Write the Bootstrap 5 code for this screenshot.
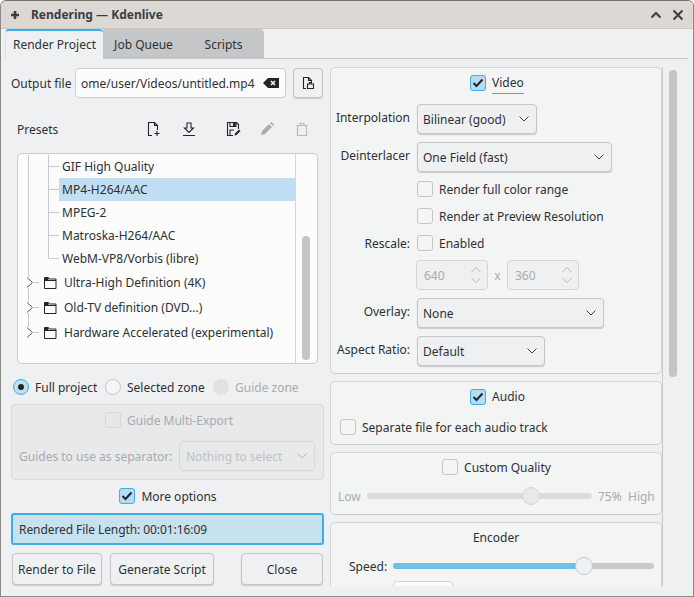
<!DOCTYPE html>
<html lang="en">
<head>
<meta charset="utf-8">
<title>Rendering — Kdenlive</title>
<link href="https://cdn.jsdelivr.net/npm/bootstrap@5.3.0/dist/css/bootstrap.min.css" rel="stylesheet">
<style>
html,body{margin:0;height:597px;overflow:hidden;background:#fff;}
body{font-family:"Noto Sans",sans-serif;font-size:12px;line-height:17px;color:#2e3134;}
.win{width:694px;height:597px;background:#eff0f1;border:1px solid #8a8986;border-top-color:#6f6e6b;border-radius:6px 6px 0 0;overflow:hidden;}
.tbar{height:28px;background:#dcd8d4;border-bottom:1px solid #c9c8c6;padding:0 8px 0 7px;flex:none;}
.ttl{font-weight:700;color:#3b3e41;margin-left:9px;}
.tabrow{height:30px;margin-left:4px;margin-right:5px;border-bottom:1px solid #c4c6c8;}
.tab-on,.tab-off{height:30px;display:flex;align-items:center;}
.tab-on{width:98px;justify-content:center;background:#eff0f1;border-top:2px solid #3daee9;border-radius:4px 4px 0 0;border-left:1px solid #dfe0e1;padding-bottom:2px;}
.tabs-off{background:#c4c6c8;border-radius:0 4px 0 0;width:161px;height:29px;}
.tab-a{width:80px;justify-content:center;height:29px;padding:1px 0 0 1px;}
.tab-b{width:81px;justify-content:center;height:29px;padding-top:1px;}
.panes{padding-left:10px;}
.lcol{width:313px;margin-top:9px;}
.rcol{width:348px;margin-left:6px;margin-top:8px;}
.h30{height:30px;}
.outl{width:57px;flex:none;white-space:nowrap;}
.field{background:#fcfcfc;border:1px solid #ccced0;border-radius:4px;width:211px;margin-left:7px;padding:0 6px 0 5px;flex:none;}
.field-text{white-space:nowrap;overflow:hidden;flex:1;}
.kbtn{background:#eff0f1;border:1px solid #c4c6c7;border-radius:4px;box-shadow:0 1px 1px #c9cbcc;padding:0;color:#2e3134;font-size:12px;line-height:17px;}
.kbtn.btn:hover{background:#eff0f1;color:#2e3134;}
.squ{width:30px;margin-left:7px;flex:none;}
.presets{height:24px;margin-top:19px;padding-left:6px;}
.ptitle{width:45px;flex:none;}
.pi{width:16px;height:16px;display:block;flex:none;}
.pi1{margin-left:83px;}.pi2{margin-left:20px;}.pi3{margin-left:28px;}.pi4{margin-left:18px;}.pi5{margin-left:19px;}
.tree{height:211px;width:301px;margin-left:6px;margin-top:12px;background:#fcfcfc;border:1px solid #c9cbcc;border-radius:5px;overflow:hidden;}
.tree-list{width:278px;border-right:1px solid #d5d6d7;height:100%;}
.leaf{height:23px;}
.leaf-first{margin-top:1px;}
.leaf svg,.fold svg{display:block;flex:none;}
.leaf-t{flex:1;height:23px;line-height:23px;padding-left:3px;}
.leaf-sel{background:#c0dff4;}
.fold{height:25px;}
.fold-t{padding-left:6px;}
.tsb{flex:1;padding-top:82px;padding-left:6px;}
.thumb{width:8px;height:124px;background:#c4c5c5;border-radius:4px;}
.rrow{height:20px;margin-top:13px;padding-left:2px;}
.rad{width:16px;height:16px;border-radius:50%;border:1px solid #c4c6c7;background:#f4f5f5;flex:none;display:flex;align-items:center;justify-content:center;}
.rad-on{border-color:#3daee9;background:#bfe0f3;}
.rad-on i{display:block;width:6px;height:6px;border-radius:50%;background:#232629;}
.rad-off{background:#e0e1e3;border-color:#e0e1e3;}
.rlabel{margin-left:6px;flex:none;white-space:nowrap;}
.rl1{width:62px;}.rl2{width:78px;}
.r2{margin-left:8px;}.r3{margin-left:8px;}
.dim{color:#a9abad;}
.grp{height:76px;margin-top:7px;background:#e8e9ea;border:1px solid #d9dadb;border-radius:4px;}
.grp-top{height:30px;padding-left:93px;}
.grp-bot{height:30px;margin-top:6px;padding-left:7px;}
.glabel{width:153px;flex:none;white-space:nowrap;}
.cbx{width:16px;height:16px;border:1px solid #c4c6c7;border-radius:3px;background:#f4f5f5;flex:none;display:flex;align-items:center;justify-content:center;}
.cbx-on{background:#b5dcf3;border-color:#3daee9;}
.cbx-dis{background:#e6e7e8;border-color:#d3d5d6;}
.clabel{margin-left:6px;}
.dcombo{width:136px;height:30px;margin-left:7px;border:1px solid #d6d7d8;border-radius:4px;padding:0 6px;color:#bfc1c3;background:#e8e9ea;flex:none;}
.more{height:20px;margin-top:6px;padding-left:1px;}
.msg{height:32px;margin-top:7px;background:#c8e1ef;border:2px solid #3daee9;border-radius:3px;padding-left:6px;letter-spacing:-.08px;}
.btns{margin-top:8px;height:32px;padding-left:1px;padding-right:1px;}
.b1{width:90px;}.b2{width:104px;margin-left:8px;}.b3{width:82px;margin-left:27px;}
.scrollwrap{height:519px;overflow:hidden;}
.frames{width:333px;height:519px;border-right:1px solid #c8cacb;overflow:hidden;flex:none;}
.frm{width:332px;background:#f3f4f4;border:1px solid #d5d6d7;border-bottom-color:#c9cbcc;border-radius:5px;}
.f-video{height:307px;}
.f-audio{height:64px;margin-top:7px;}
.f-qual{height:63px;margin-top:7px;}
.f-enc{height:120px;margin-top:7px;}
.vhead{height:30px;padding-left:2px;}
.vlabel{margin-left:6px;border-bottom:1px solid #3daee9;height:22px;line-height:21px;width:32px;}
.vrow{margin-top:8px;}
.vrow-first{margin-top:6px;}
.lbl{width:79px;text-align:right;margin-right:7px;flex:none;padding-bottom:4px;white-space:nowrap;}
.lbl-flat{padding-bottom:0;}
.combo{height:30px;padding:0 6px 0 5px;text-align:left;flex:none;}
.c120{width:120px;}.c195{width:195px;}.c187{width:187px;}.c128{width:128px;}
.r22{height:22px;margin-top:5px;}
.r22a{margin-top:6px;}
.spinrow{margin-top:6px;height:30px;padding-left:85px;}
.spin{width:72px;height:30px;border:1px solid #d3d5d6;border-radius:4px;padding:0 5px 0 7px;background:#eff0f1;color:#a9abad;flex:none;}
.xsep{width:19px;text-align:center;color:#a9abad;flex:none;}
.ahead{height:29px;padding-left:3px;}
.arow{height:22px;margin-top:5px;padding-left:9px;}
.sl-row{height:22px;margin-top:4px;padding-left:7px;}
.qhead{height:28px;padding-left:1px;}
.slow{width:22px;flex:none;}
.track{height:6px;border-radius:3px;background:#dadbdc;position:relative;flex:none;}
.t-q{width:225px;margin-left:7px;}
.t-s{width:261px;margin-left:6px;background:#c8c9ca;}
.spdl{width:38px;flex:none;}
.fill{height:6px;background:#6ec0ea;border-radius:3px;}
.knob{position:absolute;top:-6px;width:18px;height:18px;border-radius:50%;background:#e9eaeb;border:1px solid #d3d5d6;}
.knob-a{background:#f0f1f2;border-color:#c4c6c7;}
.k-q{left:155px;}.k-s{left:182px;}
.q75{margin-left:6px;width:24px;flex:none;}.qhi{margin-left:6px;}
.enc-t{height:28px;}
.spd{height:22px;margin-top:4px;padding-left:18px;}
.ebox{width:60px;height:30px;margin-left:62px;margin-top:4px;background:#fcfcfc;border:1px solid #d0d2d3;border-radius:4px;}
.rsb{padding:3px 0 0 6px;}
.rthumb{width:8px;height:307px;background:#c4c5c5;border-radius:4px;}
</style>
</head>
<body>
<div class="win d-flex flex-column">
  <div class="tbar d-flex align-items-center">
    <svg width="14" height="14" viewBox="0 0 14 14"><path d="M5.700 3h2.600v2.700H11v2.600H8.300V11H5.700V8.300H3V5.700h2.700Z" fill="#3b3e41"/></svg>
    <span class="ttl">Rendering — Kdenlive</span>
    <svg class="ms-auto" width="14" height="14" viewBox="0 0 14 14"><path d="M2.500 9.500 7 5l4.500 4.500" fill="none" stroke="#3b3e41" stroke-width="2"/></svg>
    <svg class="ms-2" width="14" height="14" viewBox="0 0 14 14"><path d="M2.500 2.500l9 9M11.500 2.500l-9 9" fill="none" stroke="#3b3e41" stroke-width="2"/></svg>
  </div>

  <div class="tabrow d-flex">
    <div class="tab-on">Render Project</div>
    <div class="tabs-off d-flex">
      <div class="tab-off tab-a">Job Queue</div>
      <div class="tab-off tab-b">Scripts</div>
    </div>
  </div>

  <div class="panes d-flex">
    <div class="lcol">
      <div class="d-flex align-items-center h30">
        <span class="outl">Output file</span>
        <div class="field h30 d-flex align-items-center">
          <span class="field-text">ome/user/Videos/untitled.mp4</span>
          <svg width="16" height="12" viewBox="0 0 16 12"><path d="M0 6 5 1h11v10H5Z" fill="#232629"/><path d="M8 4l4 4M12 4 8 8" stroke="#fcfcfc" stroke-width="1.500"/></svg>
        </div>
        <button class="btn kbtn squ h30 d-flex align-items-center justify-content-center" type="button">
          <svg width="14" height="14" viewBox="0 0 14 14" fill="none" stroke="#232629" stroke-width="1.100"><path d="M5 12.500H2.500v-11h5l3 3V6M7.500 1.500v3h3"/><path d="M6.500 8h6v4.500h-6zM8.500 8V6.500h2V8"/></svg>
        </button>
      </div>
      <div class="presets d-flex align-items-center">
        <span class="ptitle">Presets</span>
        <svg class="pi pi1" viewBox="0 0 16 16" fill="none" stroke="#232629" stroke-width="1.100"><path d="M7 14.500H3.500v-13h6l3 3V9M9.500 1.500v3h3M12 10v5M9.500 12.500h5"/></svg>
        <svg class="pi pi2" viewBox="0 0 16 16" fill="none" stroke="#232629" stroke-width="1.100"><path d="M2 14.500h12M6 2v5H3.500L8 11.500 12.500 7H10V2Z"/></svg>
        <svg class="pi pi3" viewBox="0 0 16 16" fill="none" stroke="#232629" stroke-width="1.100"><path d="M8 14.500H2.500v-13h9l2 2V8M5 1.500v4h6v-4M5 14.500V9h4"/><path d="M8.500 2.500h1.500v2H8.500z" fill="#232629"/><path d="M9.500 14.500l.5-2 4-4 1.500 1.500-4 4Z" fill="#232629" stroke="none"/></svg>
        <svg class="pi pi4" viewBox="0 0 16 16" fill="#a9abad"><path d="M2 14l1-4 7-7 3 3-7 7Z"/><path d="M11 2l1.500-1 2.500 2.500-1 1.500Z"/></svg>
        <svg class="pi pi5" viewBox="0 0 16 16" fill="none" stroke="#b6b8ba" stroke-width="1.100"><path d="M2.500 4.500h11M6 4.500v-2h4v2M3.500 4.500v10h9v-10"/></svg>
      </div>

      <div class="tree d-flex">
        <div class="tree-list">
          <div class="leaf leaf-first d-flex"><svg width="41" height="23" viewBox="0 0 41 23" stroke="#c8c9ca"><path d="M10.500 0v23M30.500 0v23M31 11.500h10" fill="none"/></svg><div class="leaf-t">GIF High Quality</div></div>
          <div class="leaf d-flex"><svg width="41" height="23" viewBox="0 0 41 23" stroke="#c8c9ca"><path d="M10.500 0v23M30.500 0v23M31 11.500h10" fill="none"/></svg><div class="leaf-t leaf-sel">MP4-H264/AAC</div></div>
          <div class="leaf d-flex"><svg width="41" height="23" viewBox="0 0 41 23" stroke="#c8c9ca"><path d="M10.500 0v23M30.500 0v23M31 11.500h10" fill="none"/></svg><div class="leaf-t">MPEG-2</div></div>
          <div class="leaf d-flex"><svg width="41" height="23" viewBox="0 0 41 23" stroke="#c8c9ca"><path d="M10.500 0v23M30.500 0v23M31 11.500h10" fill="none"/></svg><div class="leaf-t">Matroska-H264/AAC</div></div>
          <div class="leaf d-flex"><svg width="41" height="23" viewBox="0 0 41 23" stroke="#c8c9ca"><path d="M10.500 0v23M30.500 0v11.500H41" fill="none"/></svg><div class="leaf-t">WebM-VP8/Vorbis (libre)</div></div>
          <div class="fold d-flex align-items-center"><svg width="40" height="25" viewBox="0 0 40 25"><path d="M10.500 0v7M10.500 18v7M16 12.500h5" stroke="#c8c9ca" fill="none"/><path d="M9 7.500l5.500 5-5.500 5" stroke="#55585a" fill="none"/><path d="M26.500 7.500h4l1 1.500h6.500v9.500h-11.500zM26.500 10.500h11.500" stroke="#232629" fill="none"/><path d="M27 8h3.500v2.500H27z" fill="#232629"/></svg><span class="fold-t">Ultra-High Definition (4K)</span></div>
          <div class="fold d-flex align-items-center"><svg width="40" height="25" viewBox="0 0 40 25"><path d="M10.500 0v7M10.500 18v7M16 12.500h5" stroke="#c8c9ca" fill="none"/><path d="M9 7.500l5.500 5-5.500 5" stroke="#55585a" fill="none"/><path d="M26.500 7.500h4l1 1.500h6.500v9.500h-11.500zM26.500 10.500h11.500" stroke="#232629" fill="none"/><path d="M27 8h3.500v2.500H27z" fill="#232629"/></svg><span class="fold-t">Old-TV definition (DVD...)</span></div>
          <div class="fold d-flex align-items-center"><svg width="40" height="25" viewBox="0 0 40 25"><path d="M10.500 0v7M16 12.500h5" stroke="#c8c9ca" fill="none"/><path d="M9 7.500l5.500 5-5.500 5" stroke="#55585a" fill="none"/><path d="M26.500 7.500h4l1 1.500h6.500v9.500h-11.500zM26.500 10.500h11.500" stroke="#232629" fill="none"/><path d="M27 8h3.500v2.500H27z" fill="#232629"/></svg><span class="fold-t">Hardware Accelerated (experimental)</span></div>
        </div>
        <div class="tsb"><div class="thumb"></div></div>
      </div>

      <div class="rrow d-flex align-items-center">
        <span class="rad rad-on"><i></i></span><span class="rlabel rl1">Full project</span>
        <span class="rad r2"></span><span class="rlabel rl2">Selected zone</span>
        <span class="rad rad-off r3"></span><span class="rlabel dim">Guide zone</span>
      </div>

      <div class="grp">
        <div class="grp-top d-flex align-items-center dim"><span class="cbx cbx-dis"></span><span class="clabel">Guide Multi-Export</span></div>
        <div class="grp-bot d-flex align-items-center dim">
          <span class="glabel">Guides to use as separator:</span>
          <div class="dcombo d-flex align-items-center justify-content-between"><span>Nothing to select</span>
            <svg width="12" height="8" viewBox="0 0 12 8"><path d="M1.500 1.500 6 6l4.500-4.500" fill="none" stroke="#b6b8ba"/></svg></div>
        </div>
      </div>

      <div class="more d-flex align-items-center justify-content-center">
        <span class="cbx cbx-on"><svg width="12" height="10" viewBox="0 0 12 10"><path d="M1.500 5 4.500 8 10.500 1.500" fill="none" stroke="#232629" stroke-width="2"/></svg></span><span class="clabel">More options</span>
      </div>

      <div class="msg d-flex align-items-center">Rendered File Length: 00:01:16:09</div>

      <div class="btns d-flex">
        <button class="btn kbtn b1" type="button">Render to File</button>
        <button class="btn kbtn b2" type="button">Generate Script</button>
        <button class="btn kbtn b3" type="button">Close</button>
      </div>
    </div>

    <div class="rcol d-flex scrollwrap">
      <div class="frames">
        <div class="frm f-video">
          <div class="vhead d-flex align-items-center justify-content-center">
            <span class="cbx cbx-on"><svg width="12" height="10" viewBox="0 0 12 10"><path d="M1.500 5 4.500 8 10.500 1.500" fill="none" stroke="#232629" stroke-width="2"/></svg></span><span class="vlabel">Video</span>
          </div>
          <div class="d-flex align-items-center vrow-first">
            <span class="lbl">Interpolation</span>
            <button class="btn kbtn combo c120 d-flex align-items-center justify-content-between" type="button"><span>Bilinear (good)</span><svg width="12" height="8" viewBox="0 0 12 8"><path d="M1.500 1.500 6 6l4.500-4.500" fill="none" stroke="#3b3e41"/></svg></button>
          </div>
          <div class="d-flex align-items-center vrow">
            <span class="lbl">Deinterlacer</span>
            <button class="btn kbtn combo c195 d-flex align-items-center justify-content-between" type="button"><span>One Field (fast)</span><svg width="12" height="8" viewBox="0 0 12 8"><path d="M1.500 1.500 6 6l4.500-4.500" fill="none" stroke="#3b3e41"/></svg></button>
          </div>
          <div class="d-flex align-items-center r22 r22a"><span class="lbl lbl-flat"></span><span class="cbx"></span><span class="clabel">Render full color range</span></div>
          <div class="d-flex align-items-center r22"><span class="lbl lbl-flat"></span><span class="cbx"></span><span class="clabel">Render at Preview Resolution</span></div>
          <div class="d-flex align-items-center r22"><span class="lbl lbl-flat">Rescale:</span><span class="cbx"></span><span class="clabel">Enabled</span></div>
          <div class="spinrow d-flex align-items-center">
            <div class="spin d-flex align-items-center justify-content-between"><span>640</span><svg width="12" height="20" viewBox="0 0 12 20"><path d="M1.500 7 6 2.500 10.500 7M1.500 13 6 17.500 10.500 13" fill="none" stroke="#b6b8ba"/></svg></div>
            <span class="xsep">x</span>
            <div class="spin d-flex align-items-center justify-content-between"><span>360</span><svg width="12" height="20" viewBox="0 0 12 20"><path d="M1.500 7 6 2.500 10.500 7M1.500 13 6 17.500 10.500 13" fill="none" stroke="#b6b8ba"/></svg></div>
          </div>
          <div class="d-flex align-items-center vrow">
            <span class="lbl">Overlay:</span>
            <button class="btn kbtn combo c187 d-flex align-items-center justify-content-between" type="button"><span>None</span><svg width="12" height="8" viewBox="0 0 12 8"><path d="M1.500 1.500 6 6l4.500-4.500" fill="none" stroke="#3b3e41"/></svg></button>
          </div>
          <div class="d-flex align-items-center vrow">
            <span class="lbl">Aspect Ratio:</span>
            <button class="btn kbtn combo c128 d-flex align-items-center justify-content-between" type="button"><span>Default</span><svg width="12" height="8" viewBox="0 0 12 8"><path d="M1.500 1.500 6 6l4.500-4.500" fill="none" stroke="#3b3e41"/></svg></button>
          </div>
        </div>

        <div class="frm f-audio">
          <div class="ahead d-flex align-items-center justify-content-center">
            <span class="cbx cbx-on"><svg width="12" height="10" viewBox="0 0 12 10"><path d="M1.500 5 4.500 8 10.500 1.500" fill="none" stroke="#232629" stroke-width="2"/></svg></span><span class="clabel">Audio</span>
          </div>
          <div class="arow d-flex align-items-center"><span class="cbx"></span><span class="clabel">Separate file for each audio track</span></div>
        </div>

        <div class="frm f-qual">
          <div class="qhead d-flex align-items-center justify-content-center"><span class="cbx"></span><span class="clabel">Custom Quality</span></div>
          <div class="sl-row d-flex align-items-center dim">
            <span class="slow">Low</span>
            <div class="track t-q"><span class="knob k-q"></span></div>
            <span class="q75">75%</span><span class="qhi">High</span>
          </div>
        </div>

        <div class="frm f-enc">
          <div class="enc-t d-flex align-items-center justify-content-center">Encoder</div>
          <div class="spd d-flex align-items-center">
            <span class="spdl">Speed:</span>
            <div class="track t-s"><div class="fill" style="width:73%"></div><span class="knob knob-a k-s"></span></div>
          </div>
          <div class="ebox"></div>
        </div>
      </div>
      <div class="rsb"><div class="rthumb"></div></div>
    </div>
  </div>
</div>
</body>
</html>
